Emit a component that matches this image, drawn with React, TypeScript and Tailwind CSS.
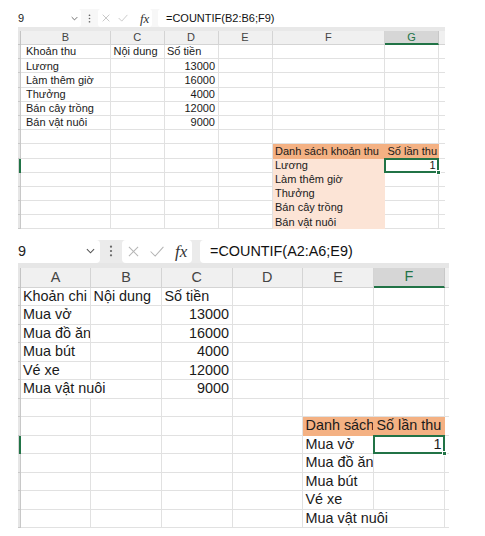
import React from 'react';

type SheetCfg = {
  cols: string;
  letters: string[];
  selCol: number;
  selRow: number;
  rows: string[][];
  orangeRow: number;
  peachCol: number | null;
  overflow: string[];
  rowH: string;
  headH: string;
  text: string;
  firstPad: string;
  pad: string;
};

const Chevron = ({ cls }: { cls: string }) => (
  <svg viewBox="0 0 10 6" className={cls} fill="none" stroke="#555" strokeWidth="1.2">
    <polyline points="1,1 5,5 9,1" />
  </svg>
);

const Dots = ({ cls }: { cls: string }) => (
  <svg viewBox="0 0 4 14" className={cls} fill="#666">
    <circle cx="2" cy="2" r="1.3" />
    <circle cx="2" cy="7" r="1.3" />
    <circle cx="2" cy="12" r="1.3" />
  </svg>
);

const Cross = ({ cls }: { cls: string }) => (
  <svg viewBox="0 0 12 12" className={cls} fill="none" stroke="#b4b4b4" strokeWidth="1.1">
    <line x1="1" y1="1" x2="11" y2="11" />
    <line x1="11" y1="1" x2="1" y2="11" />
  </svg>
);

const Check = ({ cls }: { cls: string }) => (
  <svg viewBox="0 0 16 12" className={cls} fill="none" stroke="#b4b4b4" strokeWidth="1.1">
    <polyline points="1,6 6,11 15,1" />
  </svg>
);

const Sheet = ({ cfg }: { cfg: SheetCfg }) => {
  const isNum = (t: string) => /^\d+$/.test(t);
  return (
    <div className={`grid ${cfg.cols} ${cfg.text} text-[#1a1a1a]`}>
      {/* header row */}
      <div className={`${cfg.headH} bg-[#e6e6e6] border-r border-b border-[#c4c4c4]`} />
      {cfg.letters.map((l, i) => (
        <div
          key={l}
          className={
            i === cfg.selCol
              ? `${cfg.headH} flex items-center justify-center bg-[#d6d6d6] text-[#217346] border-r border-[#c8c8c8] border-b-2 border-b-[#217346]`
              : `${cfg.headH} flex items-center justify-center bg-[#f0f0f0] text-[#444] border-r border-b border-[#d4d4d4]`
          }
        >
          {l}
        </div>
      ))}
      <div className={`${cfg.headH} bg-[#f0f0f0] border-b border-[#d4d4d4]`} />

      {cfg.rows.map((row, r) => (
        <React.Fragment key={r}>
          <div
            className={
              r === cfg.selRow
                ? `${cfg.rowH} bg-[#d6d6d6] border-r-2 border-[#217346]`
                : `${cfg.rowH} bg-[#e6e6e6] border-r border-b border-[#c8c8c8]`
            }
          />
          {row.map((t, c) => {
            const orange = r === cfg.orangeRow && c >= 4;
            const peach = cfg.peachCol === c && r > cfg.orangeRow;
            const over = cfg.overflow.includes(`${r}-${c}`);
            const sel = r === cfg.selRow && c === cfg.selCol;
            let cls = `${cfg.rowH} flex items-center whitespace-nowrap border-b `;
            cls += over ? 'overflow-visible ' : 'overflow-hidden border-r ';
            if (orange) cls += 'bg-[#f4b183] border-[#f4b183] ';
            else if (peach) cls += 'bg-[#fce4d6] border-[#fce4d6] ';
            else cls += 'border-[#e1e1e1] ';
            cls += isNum(t) ? `justify-end ${cfg.pad} ` : c === 0 ? `${cfg.firstPad} ` : `${cfg.pad} `;
            if (sel) cls += 'relative overflow-visible z-10';
            return (
              <div key={c} className={cls}>
                {t}
                {sel && (
                  <>
                    <div className="absolute -inset-[1px] border-2 border-[#217346]" />
                    <div className="absolute -right-[3px] -bottom-[3px] w-[5px] h-[5px] bg-[#217346] border border-white" />
                  </>
                )}
              </div>
            );
          })}
          <div className={`${cfg.rowH} border-b border-[#e1e1e1]`} />
        </React.Fragment>
      ))}
    </div>
  );
};

const sheet1: SheetCfg = {
  cols: 'grid-cols-[3px_90px_53.5px_54px_54px_112.5px_54px_6px]',
  letters: ['B', 'C', 'D', 'E', 'F', 'G'],
  selCol: 5,
  selRow: 8,
  rows: [
    ['Khoản thu', 'Nội dung', 'Số tiền', '', '', ''],
    ['Lương', '', '13000', '', '', ''],
    ['Làm thêm giờ', '', '16000', '', '', ''],
    ['Thưởng', '', '4000', '', '', ''],
    ['Bán cây trồng', '', '12000', '', '', ''],
    ['Bán vật nuôi', '', '9000', '', '', ''],
    ['', '', '', '', '', ''],
    ['', '', '', '', 'Danh sách khoản thu', 'Số lần thu'],
    ['', '', '', '', 'Lương', '1'],
    ['', '', '', '', 'Làm thêm giờ', ''],
    ['', '', '', '', 'Thưởng', ''],
    ['', '', '', '', 'Bán cây trồng', ''],
    ['', '', '', '', 'Bán vật nuôi', ''],
  ],
  orangeRow: 7,
  peachCol: 4,
  overflow: [],
  rowH: 'h-[14.2px]',
  headH: 'h-[14px]',
  text: 'text-[11px]',
  firstPad: 'pl-[5px]',
  pad: 'px-[2.5px]',
};

const sheet2: SheetCfg = {
  cols: 'grid-cols-[3px_70px_71px_70.5px_70.5px_71px_71px_4px]',
  letters: ['A', 'B', 'C', 'D', 'E', 'F'],
  selCol: 5,
  selRow: 8,
  rows: [
    ['Khoản chi', 'Nội dung', 'Số tiền', '', '', ''],
    ['Mua vở', '', '13000', '', '', ''],
    ['Mua đồ ăn', '', '16000', '', '', ''],
    ['Mua bút', '', '4000', '', '', ''],
    ['Vé xe', '', '12000', '', '', ''],
    ['Mua vật nuôi', '', '9000', '', '', ''],
    ['', '', '', '', '', ''],
    ['', '', '', '', 'Danh sách', 'Số lần thu'],
    ['', '', '', '', 'Mua vở', '1'],
    ['', '', '', '', 'Mua đồ ăn', ''],
    ['', '', '', '', 'Mua bút', ''],
    ['', '', '', '', 'Vé xe', ''],
    ['', '', '', '', 'Mua vật nuôi', ''],
  ],
  orangeRow: 7,
  peachCol: null,
  overflow: ['5-0', '12-4'],
  rowH: 'h-[18.5px]',
  headH: 'h-[20px]',
  text: 'text-[14.4px]',
  firstPad: 'pl-[2px]',
  pad: 'px-[2.5px]',
};

export default function App() {
  return (
    <div className="w-[485px] h-[536px] bg-white overflow-hidden font-['Liberation_Sans',Arial,sans-serif]">
      {/* first screenshot */}
      <div className="pt-[9px] pl-[18px] w-[445px]">
        <div className="flex h-[18px] bg-[#f7f7f7]">
          <div className="w-[63px] bg-white rounded-r-[3px] flex items-center text-[11px] text-[#222]">
            <span>9</span>
            <Chevron cls="w-[7px] h-[5px] ml-auto mr-[3px]" />
          </div>
          <div className="w-[17px] flex items-center justify-center">
            <Dots cls="w-[3px] h-[9px]" />
          </div>
          <div className="w-[54px] bg-white rounded-[3px] flex items-center pl-[4px]">
            <Cross cls="w-[8px] h-[8px]" />
            <Check cls="w-[10px] h-[8px] ml-[8px]" />
            <span className="ml-[12px] font-['Liberation_Serif',serif] italic text-[13px] text-[#333] leading-none">fx</span>
          </div>
          <div className="ml-[6px] flex-1 bg-white rounded-l-[3px] flex items-center pl-[8px] text-[11px] text-[#111]">
            =COUNTIF(B2:B6;F9)
          </div>
        </div>
        <div className="h-[4px] bg-[#e8e8e8]" />
        <Sheet cfg={sheet1} />
      </div>

      {/* second screenshot */}
      <div className="pt-[10.4px] pl-[18px] w-[449px]">
        <div className="flex h-[23px] bg-[#ebebeb]">
          <div className="w-[82px] bg-white rounded-r-[4px] flex items-center text-[14.4px] text-[#222]">
            <span>9</span>
            <Chevron cls="w-[9px] h-[6px] ml-auto mr-[5px]" />
          </div>
          <div className="w-[22px] flex items-center justify-center">
            <Dots cls="w-[4px] h-[12px]" />
          </div>
          <div className="w-[70px] bg-white rounded-[4px] flex items-center pl-[6px]">
            <Cross cls="w-[11px] h-[11px]" />
            <Check cls="w-[16px] h-[11px] ml-[10px]" />
            <span className="ml-[10px] font-['Liberation_Serif',serif] italic text-[17px] text-[#333] leading-none">fx</span>
          </div>
          <div className="ml-[8px] flex-1 bg-white rounded-l-[4px] flex items-center pl-[10px] text-[14.4px] text-[#111]">
            =COUNTIF(A2:A6;E9)
          </div>
        </div>
        <div className="h-[5px] bg-[#e6e6e6]" />
        <Sheet cfg={sheet2} />
      </div>
    </div>
  );
}
